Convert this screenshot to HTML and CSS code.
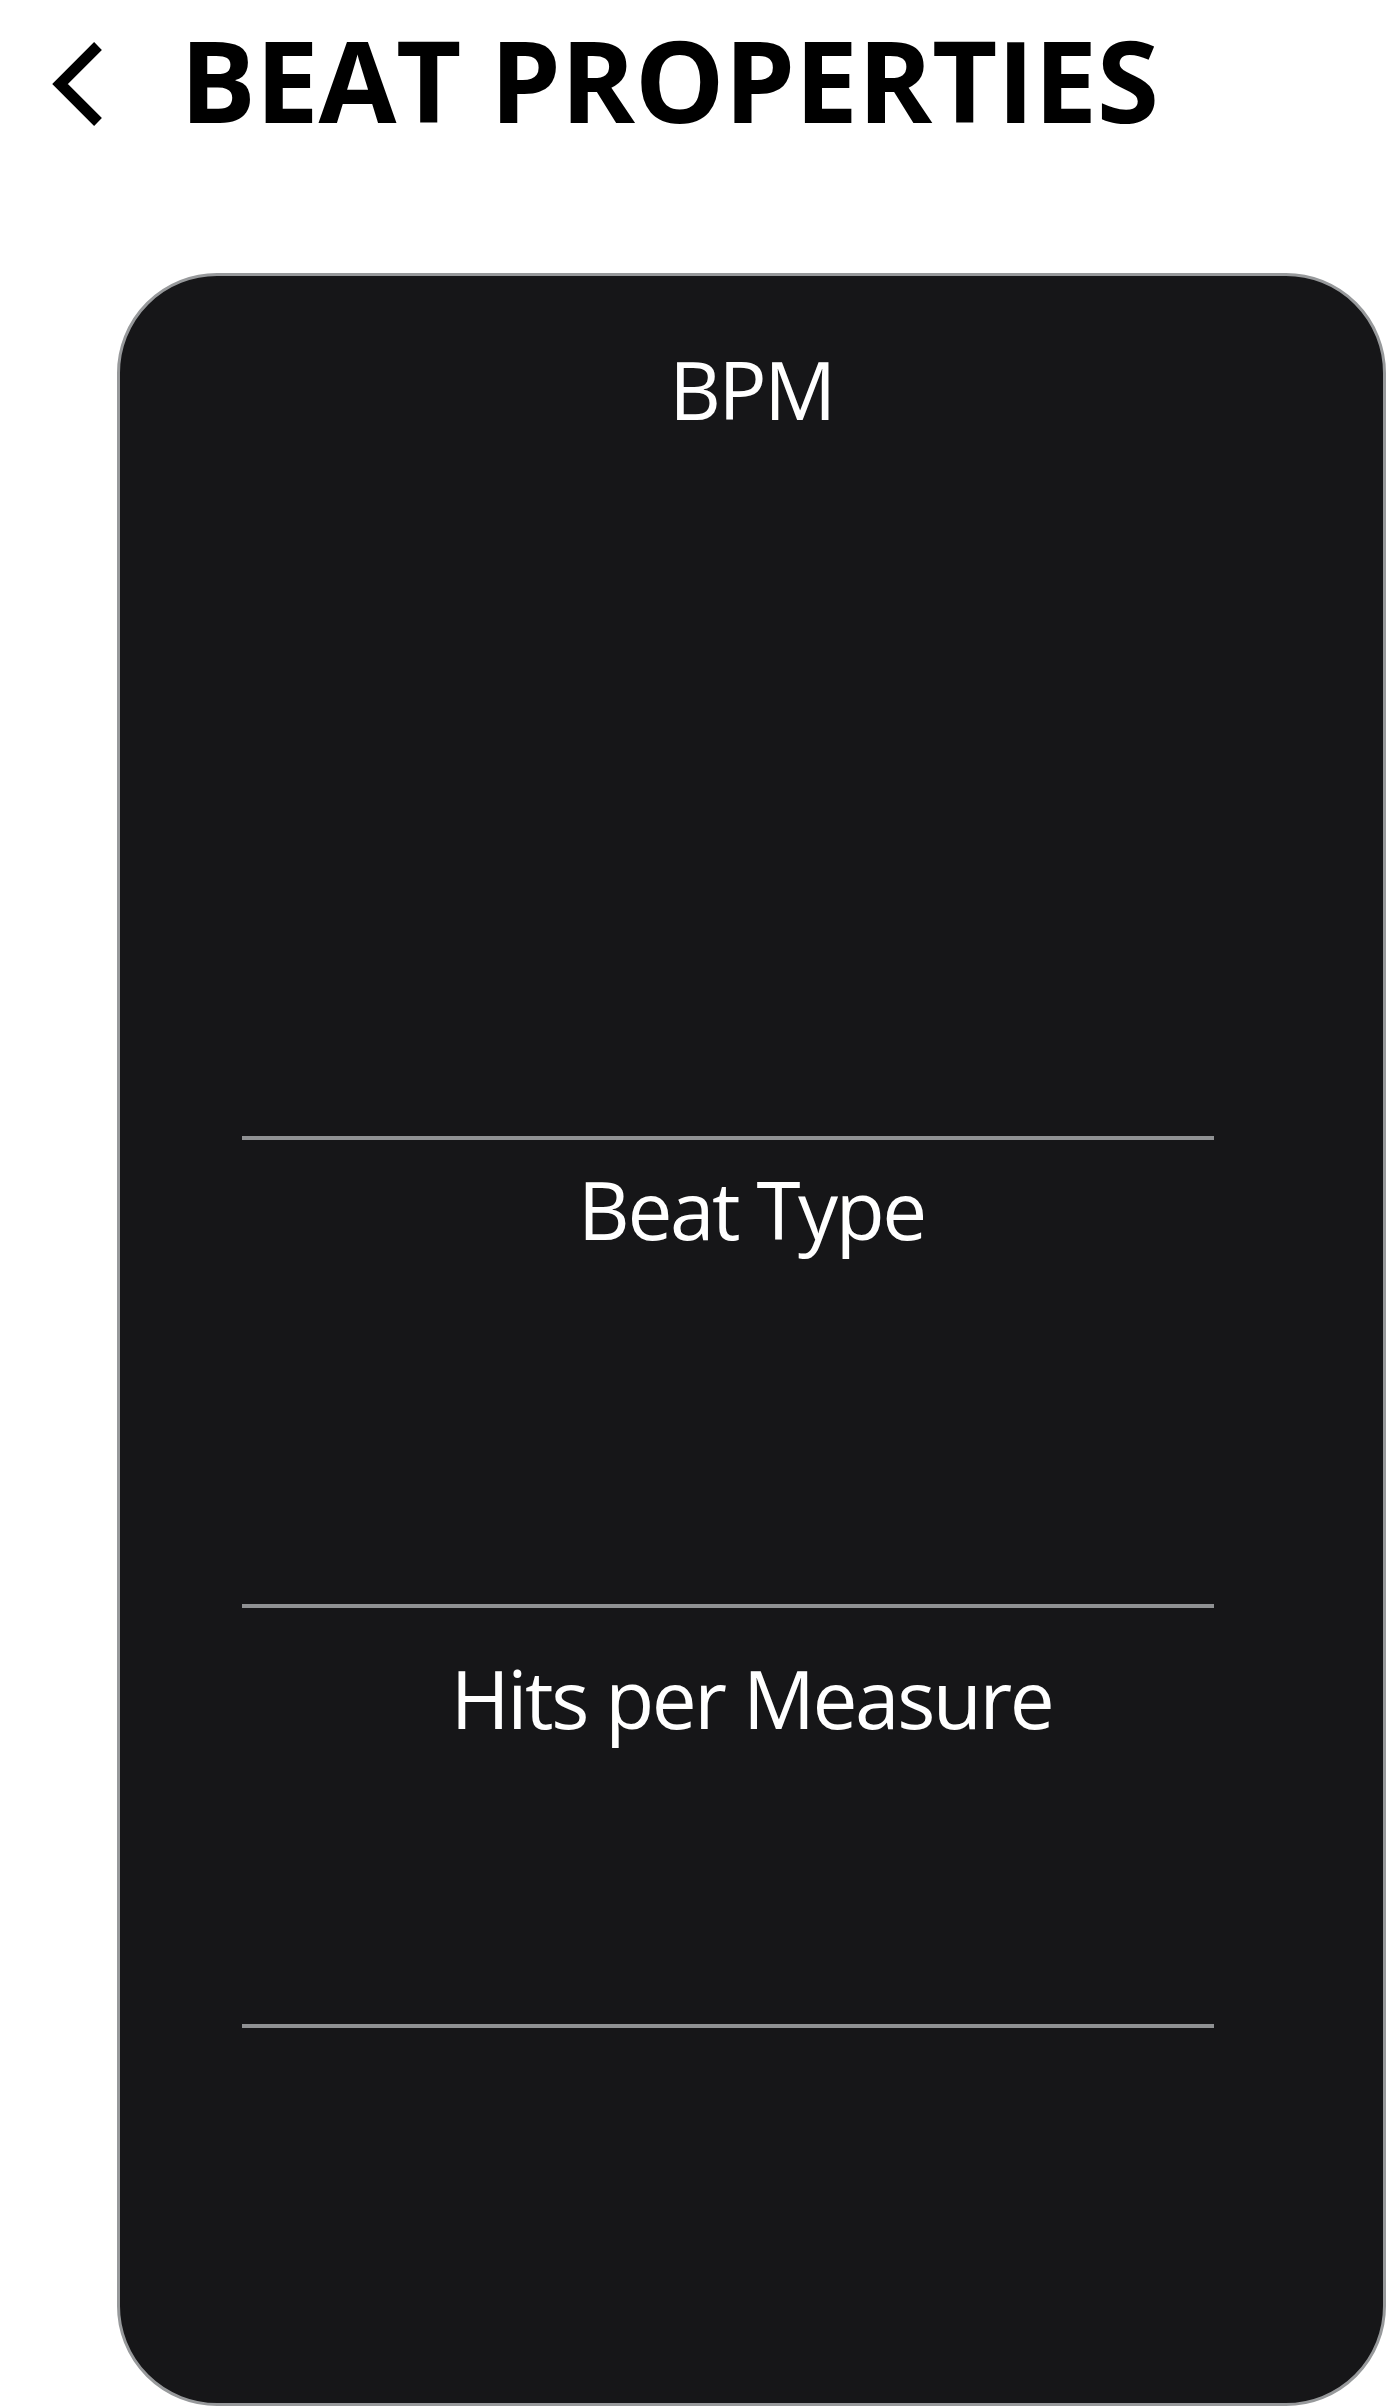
FILE: index.html
```html
<!DOCTYPE html>
<html lang="en">
<head>
<meta charset="utf-8">
<title>Beat Properties</title>
<link rel="stylesheet" href="styles.css">
</head>
<body>
<header class="header">
  <svg class="back" viewBox="0 0 180 113" width="180" height="113" aria-hidden="true">
    <polyline points="98,23 60,61 98,99" fill="none" stroke="#000" stroke-width="11" stroke-linejoin="miter" stroke-linecap="butt"/>
  </svg>
  <h1 class="title">BEAT PROPERTIES</h1>
</header>
<main class="card">
  <section class="section section-bpm">
    <div class="label">BPM</div>
    <div class="picker picker-bpm"></div>
  </section>
  <div class="divider"></div>
  <section class="section section-type">
    <div class="label">Beat Type</div>
    <div class="picker picker-type"></div>
  </section>
  <div class="divider"></div>
  <section class="section section-hits">
    <div class="label">Hits per Measure</div>
    <div class="picker picker-hits"></div>
  </section>
  <div class="divider"></div>
</main>
</body>
</html>
```
FILE: styles.css
```css
html, body {
  margin: 0;
  padding: 0;
  background: #ffffff;
}
body {
  width: 1388px;
  height: 2408px;
  overflow: hidden;
  font-family: "Open Sans", "Noto Sans", sans-serif;
}
.header {
  display: flex;
  align-items: flex-start;
  padding-top: 23px;
  height: 113px;
}
.back {
  display: block;
  flex: none;
}
.title {
  margin: 0;
  font-size: 113px;
  line-height: 113px;
  font-weight: 700;
  letter-spacing: -0.4px;
  color: #000;
}
.card {
  margin-top: 137px;
  margin-left: 117px;
  width: 1269px;
  height: 2133px;
  box-sizing: border-box;
  border: 3px solid #97999b;
  border-radius: 100px;
  background: #161618;
  display: flex;
  flex-direction: column;
  padding-top: 63px;
}
.section {
  display: flex;
  flex-direction: column;
  align-items: center;
}
.section-type { padding-top: 19px; }
.section-hits { padding-top: 40px; }
.label {
  color: #ffffff;
  font-size: 80px;
  line-height: 100px;
  font-weight: 400;
  letter-spacing: -2.4px;
  white-space: nowrap;
}
.picker { width: 100%; }
.picker-bpm { height: 697px; }
.picker-type { height: 345px; }
.picker-hits { height: 276px; }
.divider {
  margin-left: 122px;
  width: 972px;
  height: 4px;
  background: #8f9193;
}
```
